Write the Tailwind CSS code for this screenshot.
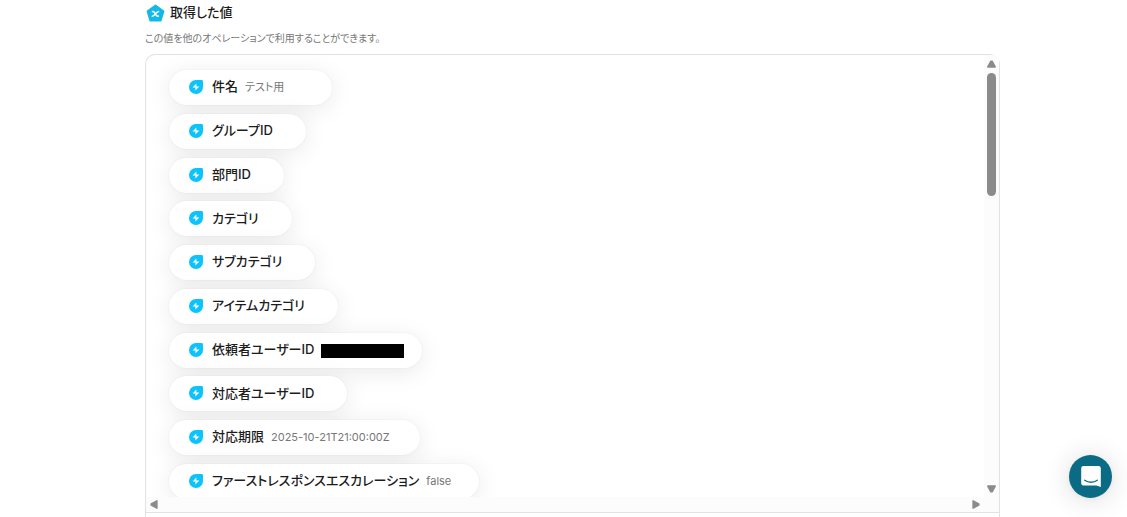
<!DOCTYPE html>
<html lang="ja">
<head>
<meta charset="utf-8">
<meta name="viewport" content="width=device-width, initial-scale=1">
<title>取得した値</title>
<script src="https://cdn.jsdelivr.net/npm/@tailwindcss/browser@4"></script>
</head>
<body class="h-screen overflow-hidden bg-white font-['Inter','Noto_Sans_CJK_JP',sans-serif] text-[#1c1c1c]">
<svg class="hidden" aria-hidden="true">
  <symbol id="bolt" viewBox="0 0 14 14">
    <path fill="#0cc4fb" d="M7 0h5.6A1.4 1.4 0 0 1 14 1.4V7A7 7 0 1 1 7 0z"/>
    <path fill="#fff" d="M7.300 3.600 3.600 7.500h2.900l-.2 2.900 4.100-4H7.400z"/>
  </symbol>
</svg>
<main class="flex h-full flex-col pr-[127px] pl-[145px]">
  <header class="pt-1">
    <h1 class="flex h-[18px] items-center gap-[5px] pl-px text-[13px] font-medium [font-feature-settings:'palt']">
      <svg class="size-[19px] shrink-0" viewBox="0 0 19 19" aria-hidden="true">
        <path d="M9.500 1.600 17.400 7.200 14.600 16.600H4.400L1.600 7.200z" fill="#12b9e9" stroke="#12b9e9" stroke-width="2" stroke-linejoin="round"/>
        <path d="M6.500 7.600c1.200-.3 1.700.2 2.400 1.500l.9 1.600c.7 1.300 1.300 1.800 2.600 1.400M12.500 7.500c-1.300.1-1.900 1-2.900 2.300S7.600 12.200 6.300 12.200" fill="none" stroke="#fff" stroke-width="1.500" stroke-linecap="round"/>
      </svg>
      取得した値
    </h1>
    <p class="mt-2 h-4 text-[10px] leading-4 text-[#777] [font-feature-settings:'palt']">この値を他のオペレーションで利用することができます。</p>
  </header>
  <section class="mt-2 flex min-h-0 flex-1 flex-col rounded-t-[10px] border border-b-0 border-[#e2e2e2]" aria-label="取得した値の一覧">
    <div class="flex min-h-0 flex-1">
      <div class="min-w-0 flex-1 overflow-hidden rounded-tl-[10px] pt-[15px] pl-[23px]">
        <ul class="flex h-[429px] flex-col items-start justify-between text-[13px] font-medium [font-feature-settings:'palt'] *:flex *:h-[35px] *:items-center *:rounded-full *:bg-white *:pr-[26px] *:pb-px *:pl-5 *:shadow-[0_4px_24px_rgba(0,0,0,0.09),0_0_2px_rgba(0,0,0,0.07)]">
          <li><svg class="mr-[9px] size-3.5" aria-hidden="true"><use href="#bolt"/></svg><span class="mr-[7px]">件名</span><span class="mr-[22px] text-[11px] font-normal text-[#777]">テスト用</span></li>
          <li><svg class="mr-[9px] size-3.5" aria-hidden="true"><use href="#bolt"/></svg><span class="mr-[7px]">グループID</span></li>
          <li><svg class="mr-[9px] size-3.5" aria-hidden="true"><use href="#bolt"/></svg><span class="mr-[7px]">部門ID</span></li>
          <li><svg class="mr-[9px] size-3.5" aria-hidden="true"><use href="#bolt"/></svg><span class="mr-[7px]">カテゴリ</span></li>
          <li><svg class="mr-[9px] size-3.5" aria-hidden="true"><use href="#bolt"/></svg><span class="mr-[7px]">サブカテゴリ</span></li>
          <li><svg class="mr-[9px] size-3.5" aria-hidden="true"><use href="#bolt"/></svg><span class="mr-[7px]">アイテムカテゴリ</span></li>
          <li><svg class="mr-[9px] size-3.5" aria-hidden="true"><use href="#bolt"/></svg><span class="mr-[7px]">依頼者ユーザーID</span><span class="-mr-2 mt-[3px] h-3.5 w-[83px] bg-black"></span></li>
          <li><svg class="mr-[9px] size-3.5" aria-hidden="true"><use href="#bolt"/></svg><span class="mr-[7px]">対応者ユーザーID</span></li>
          <li><svg class="mr-[9px] size-3.5" aria-hidden="true"><use href="#bolt"/></svg><span class="mr-[7px]">対応期限</span><span class="mr-1 text-[11px] font-normal text-[#777]">2025-10-21T21:00:00Z</span></li>
          <li><svg class="mr-[9px] size-3.5" aria-hidden="true"><use href="#bolt"/></svg><span class="mr-[7px]">ファーストレスポンスエスカレーション</span><span class="mr-0.5 text-[11px] font-normal text-[#777]">false</span></li>
        </ul>
      </div>
      <div class="flex w-[15px] flex-col items-center bg-[#fcfcfc] pt-[5px] pb-1" aria-hidden="true">
        <svg class="h-2 w-[9px]" viewBox="0 0 9 8"><path d="M3.900 1.200h1.200L8.200 6.900H.8z" fill="#8b8b8b" stroke="#8b8b8b" stroke-width="1.500" stroke-linejoin="round"/></svg>
        <div class="mt-[5px] h-[123px] w-[9px] rounded-full bg-[#8b8b8b]"></div>
        <svg class="mt-auto h-2 w-[9px]" viewBox="0 0 9 8"><path d="M.8 1.100h7.400L5.100 6.800H3.900z" fill="#8b8b8b" stroke="#8b8b8b" stroke-width="1.500" stroke-linejoin="round"/></svg>
      </div>
    </div>
    <div class="flex h-4 items-center justify-between border-b border-[#e2e2e2] bg-[#fcfcfc] pr-[19px] pl-1" aria-hidden="true">
      <svg class="h-[9px] w-2" viewBox="0 0 8 9"><path d="M1.200 3.900v1.200L6.900 8.200V.8z" fill="#8b8b8b" stroke="#8b8b8b" stroke-width="1.500" stroke-linejoin="round"/></svg>
      <svg class="h-[9px] w-2" viewBox="0 0 8 9"><path d="M1.100.8v7.400l5.700-3.100V3.900z" fill="#8b8b8b" stroke="#8b8b8b" stroke-width="1.500" stroke-linejoin="round"/></svg>
    </div>
    <div class="h-1"></div>
  </section>
</main>
<button type="button" aria-label="チャットを開く" class="fixed right-[15px] bottom-[19px] flex size-[43px] items-center justify-center rounded-full bg-[#0b6b84] shadow-[0_1px_6px_rgba(0,0,0,0.06),0_2px_28px_rgba(0,0,0,0.14)]">
  <svg class="h-[21px] w-5" viewBox="0 0 20 21" aria-hidden="true">
    <path d="M2.500 0h15A2.300 2.300 0 0 1 19.800 2.300V21l-4.300-1.500h-13A2.300 2.300 0 0 1 .2 17.200V2.300A2.300 2.300 0 0 1 2.500 0z" fill="#fff"/>
    <path d="M3.700 14.200c3.600 2.700 9 2.700 12.600 0" fill="none" stroke="#0b6b84" stroke-width="1.300" stroke-linecap="round"/>
  </svg>
</button>
</body>
</html>
